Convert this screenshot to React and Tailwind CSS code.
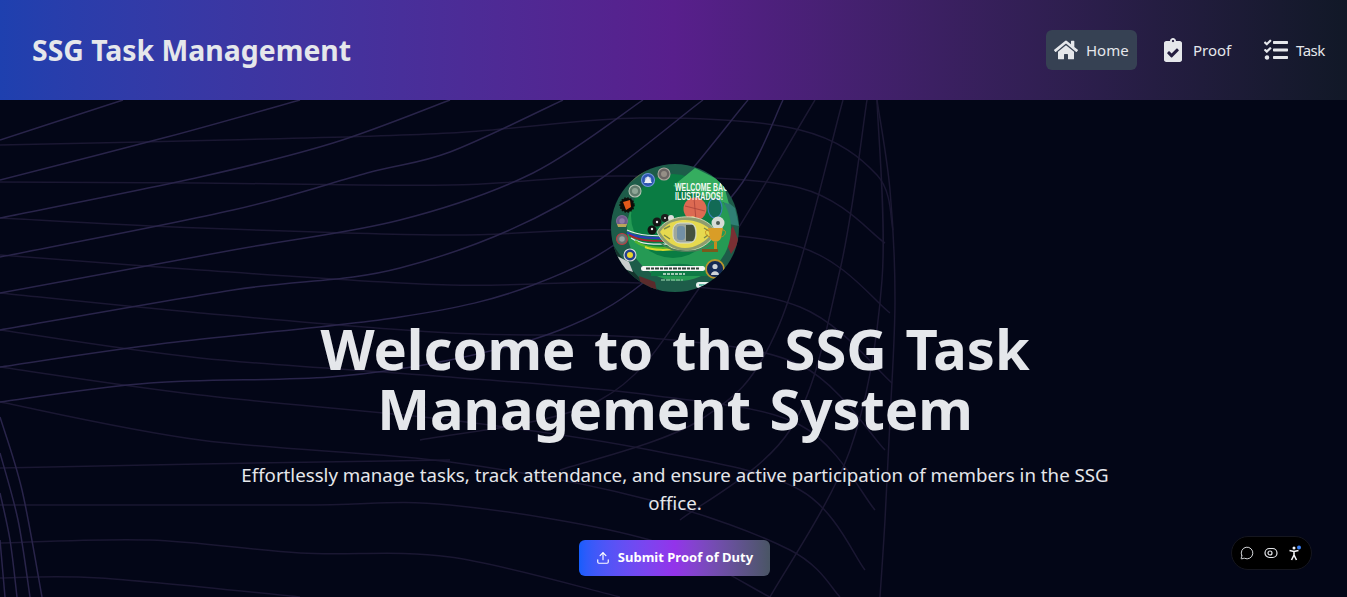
import { FaHome, FaClipboardCheck, FaTasks } from 'react-icons/fa'
import { Upload, MessageCircle } from 'lucide-react'

const FONT = "font-['Noto_Sans',sans-serif]"

// background lines, as points; smoothed into curves by toPath
const rising = [
  [[0, 140], [123, 100]],
  [[0, 180], [167, 137], [300, 100]],
  [[0, 218], [200, 177], [333, 143], [450, 100]],
  [[0, 257], [233, 210], [367, 173], [450, 152], [563, 100]],
  [[0, 293], [233, 250], [400, 220], [533, 173], [643, 100]],
  [[0, 330], [233, 290], [400, 268], [560, 205], [703, 100]],
  [[0, 367], [167, 343], [400, 317], [533, 285], [640, 225], [748, 100]],
  [[0, 402], [150, 383], [330, 377], [450, 360], [560, 330], [643, 283], [737, 190], [783, 100]],
]
const risingFaint = [
  [[420, 440], [600, 400], [700, 287], [815, 100]],
  [[560, 470], [700, 420], [777, 330], [843, 100]],
  [[680, 520], [790, 430], [840, 270], [867, 100]],
  [[770, 597], [850, 450], [882, 280], [877, 100]],
  [[877, 100], [890, 190], [895, 300], [890, 420], [885, 520], [880, 597]],
]
const flat = [
  [[0, 145], [225, 140], [450, 133], [640, 118], [800, 130], [877, 175], [893, 230]],
  [[0, 182], [200, 183], [450, 185], [620, 176], [800, 188], [885, 243]],
  [[0, 218], [200, 228], [450, 235], [620, 230], [800, 247], [890, 313]],
  [[0, 255], [200, 270], [450, 285], [640, 283], [800, 307], [892, 383]],
  [[0, 293], [200, 313], [450, 333], [650, 338], [800, 365], [885, 450]],
  [[0, 330], [200, 358], [450, 377], [650, 395], [800, 425], [875, 510]],
  [[0, 367], [200, 395], [450, 420], [650, 450], [800, 490], [865, 570]],
  [[0, 402], [200, 440], [450, 462], [650, 500], [790, 550], [840, 597]],
  [[0, 468], [200, 464], [450, 460]],
  [[0, 505], [300, 505], [450, 505], [650, 540], [770, 597]],
  [[0, 543], [150, 540], [300, 553], [450, 557], [620, 597]],
  [[0, 578], [100, 578], [300, 597]],
]
const corner = [
  [[0, 417], [22, 490], [42, 597]],
  [[0, 453], [18, 520], [30, 597]],
  [[0, 493], [10, 540], [17, 597]],
  [[0, 540], [5, 597]],
]

function toPath(pts) {
  let d = `M${pts[0][0]} ${pts[0][1]}`
  for (let i = 0; i < pts.length - 1; i++) {
    const p0 = pts[i - 1] ?? pts[i]
    const p1 = pts[i]
    const p2 = pts[i + 1]
    const p3 = pts[i + 2] ?? p2
    const c1x = p1[0] + (p2[0] - p0[0]) / 6
    const c1y = p1[1] + (p2[1] - p0[1]) / 6
    const c2x = p2[0] - (p3[0] - p1[0]) / 6
    const c2y = p2[1] - (p3[1] - p1[1]) / 6
    d += `C${c1x} ${c1y} ${c2x} ${c2y} ${p2[0]} ${p2[1]}`
  }
  return d
}

function Background() {
  return (
    <svg className="absolute left-0 top-[100px] h-[497px] w-[1347px]" viewBox="0 100 1347 497" fill="none" strokeWidth="1.5">
      <g stroke="#1a1732">{flat.map((p, i) => <path key={i} d={toPath(p)} />)}</g>
      <g stroke="#29244a">{rising.map((p, i) => <path key={i} d={toPath(p)} />)}</g>
      <g stroke="#1b1832">{risingFaint.map((p, i) => <path key={i} d={toPath(p)} />)}</g>
      <g stroke="#29244a">{corner.map((p, i) => <path key={i} d={toPath(p)} />)}</g>
    </svg>
  )
}

const badges = [
  { x: 53, y: 10, r: 6, fill: '#6b6664', ring: '#a9a59c', dot: '#958f86' },
  { x: 37, y: 16, r: 6.5, fill: '#2c55b0', ring: '#6f94dc', dot: '#aebfdf' },
  { x: 24, y: 27, r: 6, fill: '#5f7a6c', ring: '#b5c2b4', dot: '#8ea596' },
  { x: 11, y: 57, r: 5.5, fill: '#6e5a8c', ring: '#7d6d94', dot: '#8d7ba6' },
  { x: 11, y: 75, r: 5.5, fill: '#66706e', ring: '#c23a3f', dot: '#98a3a1' },
  { x: 19, y: 91, r: 6, fill: '#24408e', ring: '#d9d9dc', dot: '#e8d42c' },
]

function Logo() {
  return (
    <svg className="h-32 w-32 rounded-full" viewBox="0 0 128 128">
      <rect width="128" height="128" fill="#1d5c49" />
      <path d="M0 30 20 18 44 0H0Z" fill="#566b4a" />
      <path d="M0 78 14 98 32 118 52 128H0Z" fill="#14342c" />
      <path d="M6 92 18 98 22 108 10 104Z" fill="#c9cdcd" />
      <path d="M28 112 44 118 46 128 30 124Z" fill="#5a2b2c" />
      <path d="M96 128 128 104V128Z" fill="#123a32" />
      <path d="M114 76 122 62 128 78 120 90Z" fill="#7a2f33" />
      <path d="M112 34 124 44 128 62 118 60Z" fill="#2f7f74" />

      <circle cx="68" cy="65" r="52" fill="#259a54" />
      <circle cx="62" cy="52" r="42" fill="#0a7c43" />
      <path d="M62 22 84 4 112 18 118 40 100 34Z" fill="#35ad5f" />

      {/* sports balls behind the belt */}
      <ellipse cx="104" cy="44" rx="7" ry="10" fill="#126a55" stroke="#3a80b5" strokeWidth="1.2" />
      <circle cx="84" cy="45" r="11.5" fill="#dc6a52" />
      <path d="M74 42 94 47M83 34 85 56" stroke="#a8433a" strokeWidth="0.8" />
      <path d="M70 56 82 52 92 58 74 60Z" fill="#ecc36a" />
      <circle cx="107" cy="59" r="6.5" fill="#d7dcd6" />
      <circle cx="107" cy="59" r="2" fill="#4d5a55" />

      {/* ribbons running into the belt */}
      <path d="M16 66C28 72 44 72 62 72" stroke="#e8ecec" strokeWidth="1.2" fill="none" />
      <path d="M16 68.5C28 75 44 74 62 74" stroke="#2a3fb4" strokeWidth="2.2" fill="none" />
      <path d="M18 71C30 78 44 77 62 77" stroke="#b21f2b" strokeWidth="1.6" fill="none" />
      <path d="M20 74C32 82 48 80 66 80" stroke="#e4ecec" strokeWidth="1.2" fill="none" />
      <path d="M24 77C36 86 50 84 70 83" stroke="#56b52c" strokeWidth="2.4" fill="none" />
      <path d="M34 83C44 87 56 86 70 85" stroke="#d9da2c" strokeWidth="2" fill="none" />

      <circle cx="41" cy="66" r="4.5" fill="#111" />
      <circle cx="46" cy="58" r="4.5" fill="#161616" />
      <circle cx="54" cy="54" r="4" fill="#1c1c1c" />
      <circle cx="60" cy="54" r="3" fill="#dedede" />
      <circle cx="41" cy="65" r="1.2" fill="#eee" />
      <circle cx="46" cy="58" r="1.2" fill="#eee" />
      <circle cx="54" cy="54" r="1" fill="#eee" />

      {/* belt */}
      <path d="M46 68C53 55 68 52 80 53 92 54 101 60 105 68 99 81 86 87 74 87 62 87 51 79 46 68Z" fill="#8f9c6e" stroke="#dfe4c8" strokeWidth="0.8" />
      <path d="M49 68C56 58 66 56 74 56 84 56 95 60 102 68 95 78 84 84 74 84 64 84 54 77 49 68Z" fill="#e6d94f" />
      <path d="M53 65 59 62M53 71 59 75M93 64 98 67M93 74 97 71" stroke="#7d8a48" strokeWidth="1.4" />
      <rect x="62" y="59" width="23" height="20" rx="7" fill="#9fa79c" stroke="#dadfd0" strokeWidth="1" />
      <rect x="66" y="62" width="8" height="14" rx="3" fill="#7390a6" />
      <path d="M75 61H82C85 65 85 73 82 77H75Z" fill="#45503f" />
      <path d="M50 79C60 89 88 91 102 79" stroke="#4f7b5a" strokeWidth="1.6" fill="none" />

      {/* trophy */}
      <path d="M97 64H112L110 74C108 79 101 79 99 74Z" fill="#d99d27" />
      <path d="M97 66C93 66 94 72 99 73M112 66C116 66 115 72 110 73" stroke="#c58a1e" strokeWidth="1" fill="none" />
      <rect x="103" y="78" width="3" height="8" fill="#c58a1e" />
      <rect x="91" y="85" width="16" height="3" fill="#7a5a1c" />

      {badges.map(b => (
        <g key={b.x + '-' + b.y}>
          <circle cx={b.x} cy={b.y} r={b.r} fill={b.fill} stroke={b.ring} strokeWidth="1.1" />
          <circle cx={b.x} cy={b.y} r={b.r / 2} fill={b.dot} />
        </g>
      ))}
      <path d="M37 12 41 19H33Z" fill="#e8eef6" />
      <circle cx="16" cy="41" r="7" fill="#0d0b08" stroke="#0d0b08" strokeWidth="1.5" strokeDasharray="1.5 1.5" />
      <path d="M12 38 19 36 20 43 15 46Z" fill="#e4591a" />
      <path d="M6 60H16L15 63H7Z" fill="#b9a65a" />

      <path d="M40 108C52 97 84 97 96 108V112H40Z" fill="#0e7a46" />
      <rect x="30" y="102" width="64" height="5" rx="2.5" fill="#f2f5f2" />
      <path d="M35 104.5H89" stroke="#33453b" strokeWidth="1.8" strokeDasharray="4 1 3 1" />
      <path d="M52 110H74" stroke="#d5e6da" strokeWidth="1.4" strokeDasharray="3 1" />
      <path d="M50 116H72" stroke="#79b794" strokeWidth="1.4" strokeDasharray="4 1" />
      <rect x="85" y="118" width="14" height="6" rx="3" fill="#e8f1ee" />
      <rect x="88" y="120" width="7" height="2" fill="#5fb7a4" />

      <circle cx="104" cy="105" r="9" fill="#152a55" stroke="#b8962e" strokeWidth="1.8" />
      <circle cx="104" cy="102.5" r="2.6" fill="#cfd4d8" />
      <path d="M100 111C100 106 108 106 108 111Z" fill="#cfd4d8" />

      <text x="64" y="27" fontSize="10" fontWeight="700" fill="#f7f9f5" fontFamily="'Liberation Sans',sans-serif" textLength="53" lengthAdjust="spacingAndGlyphs">WELCOME BAC</text>
      <text x="64" y="35.5" fontSize="10" fontWeight="700" fill="#f7f9f5" fontFamily="'Liberation Sans',sans-serif" textLength="48" lengthAdjust="spacingAndGlyphs">ILUSTRADOS!</text>
    </svg>
  )
}

function NavItem({ icon, label, active, textClass }) {
  return (
    <a className={`flex h-10 items-center rounded-md p-2 text-[15px] text-gray-200 ${active ? 'bg-gray-700' : ''}`}>
      {icon}
      <span className={`ml-2 whitespace-nowrap ${textClass}`}>{label}</span>
    </a>
  )
}

function Header() {
  return (
    <header className="flex h-[100px] items-center justify-between bg-gradient-to-r from-[#1e40af] via-[#581f8c] to-[#111827] pl-8 pr-[14px]">
      <h1 className="text-[28.4px] font-bold text-gray-200">SSG Task Management</h1>
      <nav className="flex items-center gap-4">
        <NavItem active icon={<FaHome className="text-2xl" />} label="Home" textClass="w-[43px]" />
        <NavItem icon={<FaClipboardCheck className="text-2xl" />} label="Proof" textClass="w-[39px]" />
        <NavItem icon={<FaTasks className="text-2xl" />} label="Task" textClass="w-[29px] tracking-[-0.5px]" />
      </nav>
    </header>
  )
}

function AccessPill() {
  return (
    <div className="fixed left-[1231px] top-[536px] flex h-[34px] w-[81px] items-center justify-center gap-[10px] rounded-full border border-[#15161f] bg-black text-gray-200">
      <MessageCircle size={14} strokeWidth={1.6} className="-ml-[2px]" />
      <svg width="14" height="14" viewBox="0 0 14 14" fill="none" stroke="currentColor" strokeWidth="1.2">
        <rect x="1" y="2.5" width="12" height="9" rx="4.5" />
        <circle cx="6" cy="7" r="2" />
      </svg>
      <svg width="14" height="16" viewBox="0 0 14 16" fill="none">
        <circle cx="6" cy="3" r="1.5" fill="#f3f4f6" />
        <path d="M1.5 5.5 6 6.5 10.5 5.5M6 6.5V10M6 10 3.5 15M6 10 8.5 15" stroke="#f3f4f6" strokeWidth="1.6" />
        <circle cx="11" cy="2.5" r="2" fill="#3b82f6" />
      </svg>
    </div>
  )
}

export default function App() {
  return (
    <div className={`relative h-screen overflow-hidden bg-[#030617] ${FONT}`}>
      <Header />
      <Background />
      <main className="relative flex flex-col items-center pl-[19px] pr-4 pt-16 text-center">
        <Logo />
        <h2 className="mt-[26px] max-w-[800px] text-[56px] font-bold leading-[60px] text-gray-200 [word-spacing:4px]">
          Welcome to the SSG Task Management System
        </h2>
        <p className="mt-[23px] max-w-[896px] text-[18.7px] leading-7 text-gray-200">
          Effortlessly manage tasks, track attendance, and ensure active participation of members in the SSG office.
        </p>
        <button className="mr-[1px] mt-[23px] flex h-9 w-[191px] items-center justify-center gap-2 rounded-md bg-gradient-to-r from-blue-600 via-[#9333ea] to-gray-600 text-[13px] font-bold text-white">
          <Upload size={14} strokeWidth={2} />
          Submit Proof of Duty
        </button>
      </main>
      <AccessPill />
    </div>
  )
}
